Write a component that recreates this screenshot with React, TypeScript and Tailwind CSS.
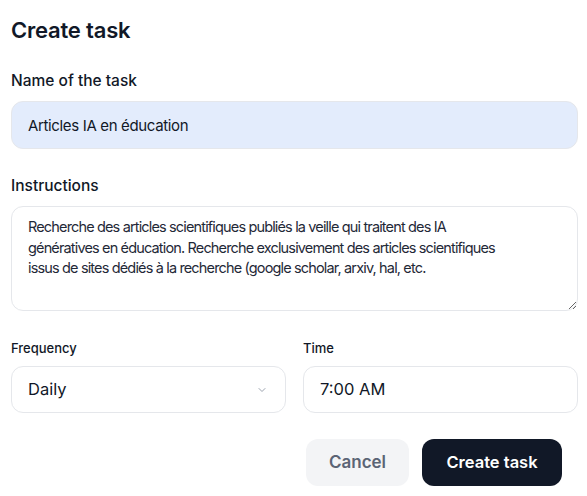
import React from 'react';

export default function App() {
  return (
    <div className="w-[587px] h-[496px] bg-white pl-[11px] pr-[9px] pt-[14px] text-[#111827]" style={{ fontFamily: 'Inter, "Noto Sans", sans-serif' }}>
      <h1 className="text-[22px] font-semibold leading-[32px] tracking-[-0.2px]">Create task</h1>

      <label className="block mt-[23px] text-[15.5px] font-medium leading-[24px]">Name of the task</label>
      <input
        type="text"
        defaultValue="Articles IA en éducation"
        className="mt-[8px] w-full h-[48px] rounded-xl border border-[#e5e7eb] bg-[#e3ecfc] px-4 text-[15px] tracking-[-0.35px] text-[#111827] outline-none"
      />

      <label className="block mt-[25px] text-[15.5px] font-medium leading-[24px]">Instructions</label>
      <textarea
        spellCheck={false}
        defaultValue="Recherche des articles scientifiques publiés la veille qui traitent des IA génératives en éducation. Recherche exclusivement des articles scientifiques issus de sites dédiés à la recherche (google scholar, arxiv, hal, etc."
        className="mt-[8px] block w-full h-[105px] rounded-xl border border-[#e5e7eb] bg-white pl-4 pr-[74px] py-[10px] text-[14.5px] tracking-[-0.85px] leading-[20.5px] text-[#1f2937] outline-none"
      />

      <div className="mt-[27px] grid grid-cols-2 gap-[17px]">
        <div>
          <label className="block text-[13px] font-medium leading-[20px]">Frequency</label>
          <div className="mt-[8px] flex h-[47px] items-center justify-between rounded-xl border border-[#e5e7eb] bg-white pl-4 pr-[17px]">
            <span className="text-[16.5px]">Daily</span>
            <svg width="12" height="12" viewBox="0 0 24 24" fill="none" stroke="#9ca3af" strokeWidth="2" strokeLinecap="round" strokeLinejoin="round">
              <path d="m6 9 6 6 6-6" />
            </svg>
          </div>
        </div>
        <div>
          <label className="block text-[13px] font-medium leading-[20px]">Time</label>
          <div className="mt-[8px] flex h-[47px] items-center rounded-xl border border-[#e5e7eb] bg-white px-4">
            <span className="text-[16.5px]">7:00 AM</span>
          </div>
        </div>
      </div>

      <div className="mt-[26px] flex justify-end gap-[13px] pr-[16px]">
        <button className="h-[47px] w-[103px] rounded-xl bg-[#f3f4f6] text-[17px] font-semibold text-[#5b6475]">Cancel</button>
        <button className="h-[47px] w-[140px] rounded-xl bg-[#111827] text-[16.5px] font-semibold text-white">Create task</button>
      </div>
    </div>
  );
}
